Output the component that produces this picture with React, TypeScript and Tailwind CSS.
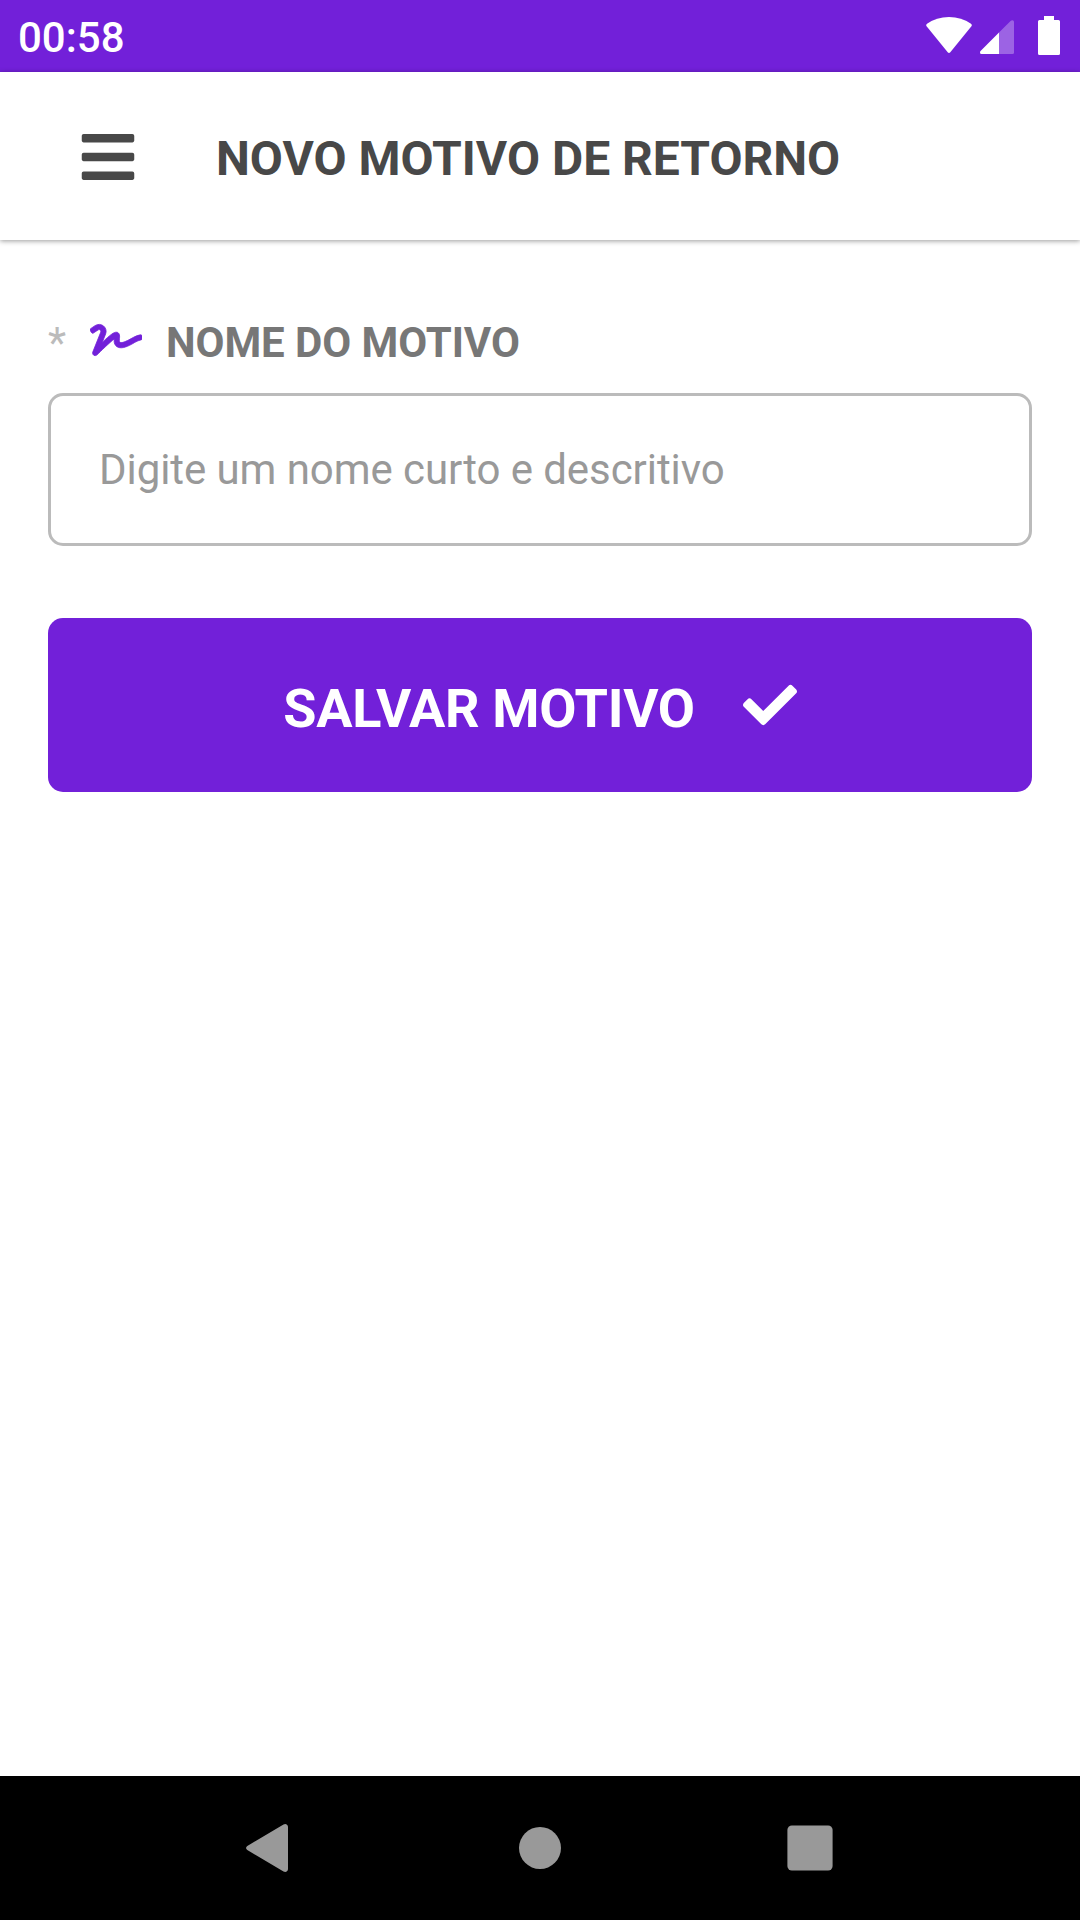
import { FaBars, FaCheck, FaSignature } from "react-icons/fa";

function StatusBar() {
  return (
    <div className="flex h-[72px] shrink-0 items-start justify-between bg-[#7220d9] pr-5 pl-[18px] text-white">
      <span className="pt-[17px] text-[42px] leading-[42px] font-medium">00:58</span>
      <div className="flex items-start">
        <svg className="mt-[17px]" width="46" height="36" viewBox="0 0 46 36" fill="currentColor">
          <path d="M.6 9.300Q-.4 8 1 6.800Q10.500 0 23 0Q35.500 0 45 6.800Q46.400 8 45.400 9.300L24.300 35.300Q23 36.700 21.700 35.300Z" />
        </svg>
        <svg className="mt-5 ml-2" width="34" height="34" viewBox="0 0 34 34" fill="currentColor">
          <path d="M19 12.500L30.800.8Q32 -.3 33.300.5Q34 1 34 2V32.500Q34 34 32.500 34H19Z" fillOpacity=".3" />
          <path d="M19 12.500V34H1.500Q0 34 0 32.500Q0 31.600.8 30.800Z" />
        </svg>
        <svg className="mt-4 ml-6" width="22" height="39" viewBox="0 0 22 39" fill="currentColor">
          <path d="M6 0h10v4h4.500q1.500 0 1.500 1.500v32q0 1.500-1.500 1.500h-19q-1.500 0-1.500-1.500v-32q0-1.500 1.500-1.500H6Z" />
        </svg>
      </div>
    </div>
  );
}

function NavigationBar() {
  return (
    <nav className="grid h-[144px] shrink-0 grid-cols-[repeat(3,270px)] place-items-center justify-center bg-black text-[#999999]">
      <svg className="-ml-[6px]" width="42" height="48" viewBox="0 0 42 48" fill="currentColor">
        <path d="M1.300 22L37.500.5Q39.500 -.5 41 .7Q42 1.500 42 3V45Q42 46.500 41 47.300Q39.500 48.500 37.500 47.500L1.300 26Q-1.200 24 1.300 22Z" />
      </svg>
      <span className="size-[42px] rounded-full bg-current" />
      <svg width="46" height="46" viewBox="0 0 46 46" fill="currentColor">
        <rect x=".4" y=".4" width="45.200" height="45.200" rx="4.500" />
      </svg>
    </nav>
  );
}

export default function App() {
  return (
    <div className="flex h-[1920px] w-[1080px] flex-col overflow-hidden bg-white font-['Roboto',sans-serif]">
      <StatusBar />
      <header className="z-10 flex h-[168px] shrink-0 items-center bg-white pl-[78px] text-[#484848] shadow-[0_1px_5px_rgba(0,0,0,0.4)]">
        <FaBars size={60} className="mt-px" />
        <h1 className="ml-[78px] pt-[6px] text-[48px] leading-none font-bold">NOVO MOTIVO DE RETORNO</h1>
      </header>
      <main className="flex flex-1 flex-col px-12 pt-[76px]">
        <label className="flex h-[53px] items-center">
          <span className="w-[42px] text-[42px] text-[#bbbbbb]">*</span>
          <FaSignature size={52} strokeWidth={10} className="mb-[5px] shrink-0 overflow-hidden text-[#7220d9]" />
          <span className="ml-6 text-[42px] font-bold tracking-[-0.08px] text-[#777777]">NOME DO MOTIVO</span>
        </label>
        <input
          className="mt-6 h-[153px] rounded-[15px] border-[3px] border-[#bbbbbb] px-12 text-[42px] tracking-[-0.07px] placeholder:text-[#999999]"
          placeholder="Digite um nome curto e descritivo"
        />
        <button className="mt-[72px] flex h-[174px] items-center justify-center rounded-[15px] bg-[#7220d9] text-white">
          <span className="pt-[6px] text-[54px] font-bold tracking-[-0.3px]">SALVAR MOTIVO</span>
          <FaCheck size={54} className="ml-12" />
        </button>
      </main>
      <NavigationBar />
    </div>
  );
}
